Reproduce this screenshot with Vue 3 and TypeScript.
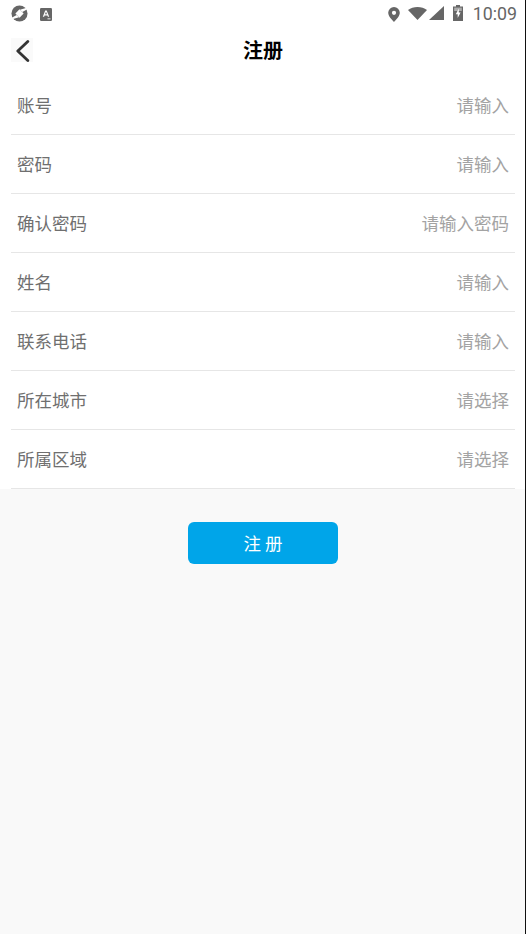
<script setup lang="ts">
const rows: { label: string; hint: string }[] = [
  { label: '账号', hint: '请输入' },
  { label: '密码', hint: '请输入' },
  { label: '确认密码', hint: '请输入密码' },
  { label: '姓名', hint: '请输入' },
  { label: '联系电话', hint: '请输入' },
  { label: '所在城市', hint: '请选择' },
  { label: '所属区域', hint: '请选择' },
]
</script>

<template>
  <div class="page">
    <div class="status">
      <div class="status-left">
        <svg viewBox="0 0 18 18" width="17" height="17">
          <circle cx="9" cy="9" r="8.500" fill="#666" />
          <path d="M9 4.600 13.400 9 9 13.400 4.600 9Z" fill="#fff" />
          <path d="M9.500 5.100 15.800 3.200 16.800 4.800 12 7.500Z" fill="#fff" />
          <path d="M8.500 12.900 2.200 14.800 1.200 13.200 6 10.500Z" fill="#fff" />
        </svg>
        <svg class="ic-a" viewBox="0 0 12 13" width="12" height="13">
          <rect width="12" height="13" rx="1.200" fill="#666" />
          <path d="M2.800 8.800 5.200 2.500h1.500L9.200 8.800H7.900L7.400 7.400H4.600L4.100 8.800ZM5 6.300h2L6 3.800Z" fill="#fff" />
          <rect x="7.500" y="10" width="3" height="1.500" fill="#bbb" />
        </svg>
      </div>
      <div class="status-right">
        <svg class="ic-pin" viewBox="0 0 12 15" width="12" height="15">
          <path d="M6 0a5.800 5.800 0 0 0-5.800 5.800C.2 9.800 6 15 6 15s5.800-5.200 5.800-9.200A5.800 5.800 0 0 0 6 0Zm0 7.900a2.100 2.100 0 1 1 0-4.200 2.100 2.100 0 0 1 0 4.200Z" fill="#666" />
        </svg>
        <svg class="ic-wifi" viewBox="0 0 19 13" width="19" height="13">
          <path d="M0 2.900C2.600 1 5.900 0 9.500 0s6.900 1 9.500 2.900L9.500 13Z" fill="#666" />
        </svg>
        <svg class="ic-signal" viewBox="0 0 15 14" width="15" height="14">
          <path d="M15 0V14H0Z" fill="#666" />
        </svg>
        <svg class="ic-batt" viewBox="0 0 10 16" width="10" height="16">
          <path d="M3 0h4v1.400H10V16H0V1.400H3Z" fill="#666" />
          <path d="M1.200 2.600H8.800V6H1.200Z" fill="#aaa" />
          <path d="M5.800 3.400 2.800 9.200h1.900v3.900L7.600 7.500H5.800Z" fill="#fff" />
        </svg>
        <span class="time">10:09</span>
      </div>
    </div>

    <header class="nav">
      <button class="back" type="button" aria-label="返回">
        <svg viewBox="0 0 22 24" width="22" height="24">
          <path d="M16.800 3.500 6.800 13 16.800 22.500" fill="none" stroke="#333" stroke-width="2.800" stroke-linecap="round" stroke-linejoin="round" />
        </svg>
      </button>
      <h1 class="title">注册</h1>
    </header>

    <section class="form">
      <div v-for="row in rows" :key="row.label" class="row">
        <span class="label">{{ row.label }}</span>
        <span class="hint">{{ row.hint }}</span>
      </div>
    </section>

    <div class="actions">
      <button class="submit" type="button">注 册</button>
    </div>
  </div>
</template>

<style>
html, body { margin: 0; background: #f9f9f9; }
</style>

<style scoped>
.page {
  position: relative;
  width: 526px;
  height: 934px;
  overflow: hidden;
  background: #f9f9f9;
  font-family: "Noto Sans CJK SC", "Noto Sans", sans-serif;
}
.page::after {
  content: "";
  position: absolute;
  top: 0;
  right: 0;
  bottom: 0;
  width: 1px;
  background: #111;
}
.status {
  height: 27px;
  background: #fff;
  display: flex;
  justify-content: space-between;
  align-items: center;
  padding: 0 9px 0 11px;
}
.status-left { display: flex; align-items: center; gap: 12px; }
.ic-a { margin-top: 1px; }
.status-right { display: flex; align-items: center; }
.ic-pin { margin-top: 1px; }
.ic-wifi { margin-left: 8px; margin-top: -1px; }
.ic-signal { margin-left: 2px; margin-top: -1px; }
.ic-batt { margin-left: 9px; margin-top: -1px; }
.time {
  font-family: Roboto, "Liberation Sans", sans-serif;
  font-size: 17.800px;
  color: #666;
  margin-left: 10px;
}
.nav {
  height: 49px;
  background: #fff;
  display: flex;
  align-items: center;
  justify-content: center;
  position: relative;
  box-sizing: border-box;
  padding-bottom: 3px;
}
.back {
  position: absolute;
  left: 11px;
  top: 11px;
  width: 22px;
  height: 24px;
  padding: 0;
  border: 0;
  background: #fafafa;
  display: flex;
}
.title {
  margin: 0;
  font-size: 20px;
  font-weight: 700;
  color: #000;
  line-height: 1;
}
.form { background: #fff; padding: 0 11px; height: 413px; }
.row {
  height: 59px;
  box-sizing: border-box;
  border-bottom: 1px solid #e6e6e6;
  display: flex;
  justify-content: space-between;
  align-items: center;
  padding: 0 6px 1.500px;
}
.label { font-size: 17.500px; color: #6f6f6f; }
.hint { font-size: 17.500px; color: #a3a3a3; }
.actions { display: flex; justify-content: center; padding-top: 33px; }
.submit {
  width: 149.400px;
  height: 42px;
  border: 0;
  border-radius: 6px;
  background: #00a5e9;
  color: #fff;
  font-family: inherit;
  font-size: 17.500px;
  padding: 0 0 2px;
}
</style>
